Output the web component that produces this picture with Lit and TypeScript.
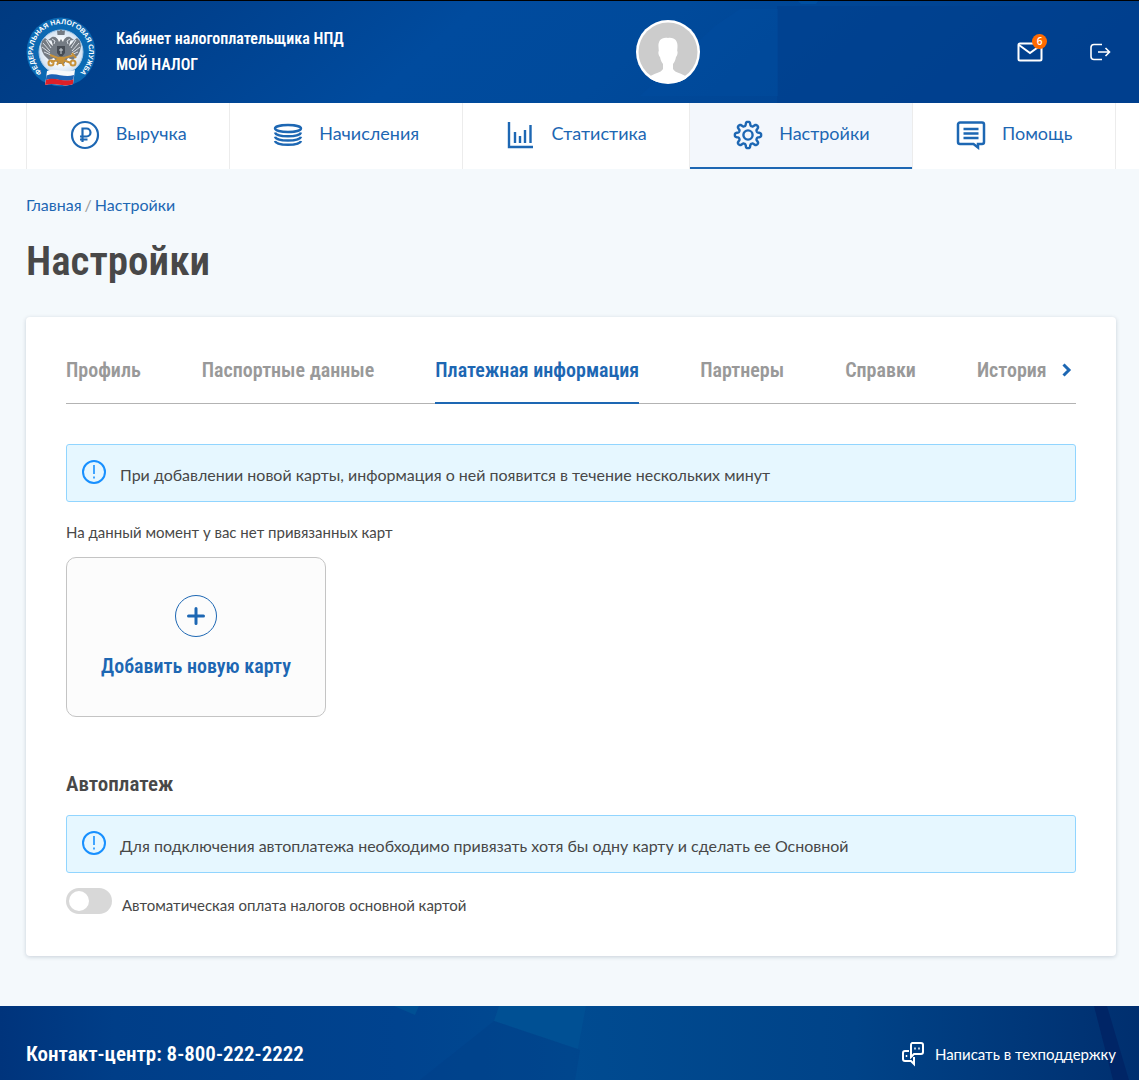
import { LitElement, html, css, svg } from "lit";
import { customElement, state } from "lit/decorators.js";
import { classMap } from "lit/directives/class-map.js";

const gearPath = (() => {
  const points: string[] = [];
  for (let i = 0; i < 160; i++) {
    const a = (i / 160) * Math.PI * 2;
    const r = 11.3 + 1.9 * Math.tanh(2 * Math.cos(8 * a));
    points.push(`${(15 + r * Math.sin(a)).toFixed(2)} ${(15 - r * Math.cos(a)).toFixed(2)}`);
  }
  return `M${points.join("L")}Z`;
})();

const icons = {
  ruble: svg`<g stroke-width="2.2"><circle cx="15" cy="15" r="13"/><path d="M12.500 22V8.500h4a4 4 0 0 1 0 8H10M10 19.500h7.500"/></g>`,
  coins: svg`<g stroke-width="2.4"><ellipse cx="15" cy="8.500" rx="13" ry="3.500"/><path d="M2 12.500c1 5 25 5 26 0M2 16.800c1 5 25 5 26 0M2 21c1 5 25 5 26 0"/></g>`,
  chart: svg`<g stroke-width="2.4"><path d="M3 2v25h24M9 12v11M14 16v7M19 10v13M24.500 5v18"/></g>`,
  gear: svg`<g stroke-width="2.4"><path d=${gearPath}/><circle cx="15" cy="15" r="4.600"/></g>`,
  chat: svg`<g stroke-width="2.5"><path d="M4 2.500h22a2 2 0 0 1 2 2V22a2 2 0 0 1-2 2h-4v3.500L17.500 24H4a2 2 0 0 1-2-2V4.500a2 2 0 0 1 2-2Z"/><path d="M7.500 9h15M7.500 13.500h15M7.500 18h15"/></g>`,
};

const sections: { label: string; icon: keyof typeof icons }[] = [
  { label: "Выручка", icon: "ruble" },
  { label: "Начисления", icon: "coins" },
  { label: "Статистика", icon: "chart" },
  { label: "Настройки", icon: "gear" },
  { label: "Помощь", icon: "chat" },
];

const tabs = ["Профиль", "Паспортные данные", "Платежная информация", "Партнеры", "Справки", "История"];

@customElement("tax-emblem")
class TaxEmblem extends LitElement {
  static styles = css`
    :host { display: block; width: 70px; height: 70px; }
    svg { display: block; width: 100%; height: 100%; overflow: visible; }
    .ring { font: bold 7px "Liberation Sans", sans-serif; fill: #fff; }
  `;
  render() {
    return html`<svg viewBox="0 0 70 70" role="img" aria-label="ФНС">
      <defs>
        <path id="arc" d="M17 56.500A28 28 0 1 1 53 56.500"/>
        <radialGradient id="disc"><stop offset=".5" stop-color="#fff"/><stop offset="1" stop-color="#cfe0f1"/></radialGradient>
      </defs>
      <circle cx="35" cy="35" r="34.500" fill="#0b69b3"/>
      <circle cx="35" cy="35" r="22" fill="url(#disc)" stroke="#a4c8e6" stroke-width="1"/>
      <text class="ring" text-anchor="middle"><textPath href="#arc" startOffset="50%">ФЕДЕРАЛЬНАЯ НАЛОГОВАЯ СЛУЖБА</textPath></text>
      <g fill="#747b83">
        <path d="M35 12l1.500 2 2.500-.5-.5 4.500h-7l-.5-4.500 2.500.500z"/>
        <path d="M33 25c-1-4-4-6-7-5l-4 3 3.500.500L27 29c-3-2-4-5-8-8l-3 3-1 5 1 5 2 4 3 3 2 2 5-2 4 6h6l4-6 5 2 2-2 3-3 2-4 1-5-1-5-3-3c-4 3-5 6-8 8l1.500-5.500L48 23l-4-3c-3-1-6 1-7 5l-2-3z"/>
      </g>
      <g stroke="#e4e9ee" stroke-width=".9" fill="none">
        <path d="M17 26l7 8M16 30l8 6M18 35l7 3M20 23l5 8M53 26l-7 8M54 30l-8 6M52 35l-7 3M50 23l-5 8M26 22l3 2-1 3M44 22l-3 2 1 3M29 18l2 3M41 18l-2 3"/>
      </g>
      <path d="M31 29h8v7l-4 5-4-5z" fill="#454b53"/>
      <path d="M35 31v6M33 33h4" stroke="#cbd2d8" stroke-width="1"/>
      <g stroke="#c8923a" stroke-width="2" fill="none">
        <path d="M25 45l23-7M46 36l4 5M45 46l-21-8M31 48l3-6 4 7"/>
        <circle cx="25" cy="46" r="2.500"/><circle cx="47" cy="46" r="2.500"/><circle cx="35" cy="43" r="2.500"/>
      </g>
      <path d="M21 54c9-4 17 3 28-1l-2 14c-10 4-17-2-28 1z" fill="#f7f9fb"/>
      <path d="M20.500 58.500c9-4 17 3 27.500-.5l-.6 4.500c-10 4-18-3-27.500.500z" fill="#1c62b4"/>
      <path d="M20 63c9-4 17 3 27.500-.5L47 67c-10 4-17-2-28 1z" fill="#dc2027"/>
    </svg>`;
  }
}

@customElement("info-alert")
class InfoAlert extends LitElement {
  static styles = css`
    :host {
      display: flex; align-items: center; gap: 14px; box-sizing: border-box; min-height: 58px;
      padding: 8px 15px; border: 1px solid #91d5ff; border-radius: 3px; background: #e6f7ff;
      font-size: 16px; line-height: 24px;
    }
    svg { flex: none; width: 24px; height: 24px; margin-bottom: 2px; }
    .text { padding-top: 4px; }
  `;
  render() {
    return html`<svg viewBox="0 0 24 24" fill="none" stroke="#1890ff" stroke-width="2" aria-hidden="true">
        <circle cx="12" cy="12" r="11"/><path stroke-width="1.600" d="M12 5v9M12 16.500v2" />
      </svg><span class="text"><slot></slot></span>`;
  }
}

@customElement("app-root")
class AppRoot extends LitElement {
  @state() private activeTab = 2;
  @state() private autopay = false;

  static styles = css`
    :host {
      --blue: #1d67b3;
      --ink: #484848;
      --display: "Roboto Condensed", "Open Sans Condensed", "Liberation Sans", sans-serif;
      display: flex; flex-direction: column; min-height: 100vh; background: #f4f9fc; color: var(--ink);
      font: 15px/24px Lato, "Noto Sans", sans-serif;
    }
    * { box-sizing: border-box; }
    a { color: inherit; text-decoration: none; }
    button { font: inherit; color: inherit; background: none; border: 0; padding: 0; cursor: pointer; }
    h1, h2, p { margin: 0; }
    .icon { fill: none; stroke: currentColor; stroke-width: 2; flex: none; display: block; }

    .header, .footer { position: relative; color: #fff; }
    .backdrop { position: absolute; inset: 0; width: 100%; height: 100%; display: block; }
    .header { border-top: 1px solid #000; background: #00428f; }
    .bar {
      position: relative; display: grid; grid-template-columns: minmax(0, 610fr) 64px minmax(0, 411fr);
      align-items: center; min-height: 102px; padding: 0 28px 0 26px;
    }
    .brand { display: flex; align-items: center; gap: 20px; font: 600 16px/26px var(--display); }
    .avatar { display: block; width: 64px; height: 64px; }
    .actions { display: flex; justify-content: flex-end; align-items: center; gap: 46px; }
    .mail { position: relative; display: block; }
    .badge {
      position: absolute; top: -8px; right: -4px; width: 15px; height: 15px; border-radius: 50%;
      background: #ff6a00; font: 600 10px/15px "Open Sans", sans-serif; text-align: center;
    }

    .nav { background: #fff; padding: 0 23px 0 26px; display: flex; }
    .section {
      flex: 1 1 auto; display: flex; justify-content: center; gap: 16px; height: 66px; padding: 17px 16px 0;
      border-left: 1px solid #ececec; color: var(--blue); font-size: 18px; line-height: 26px;
    }
    .section:last-child { border-right: 1px solid #ececec; }
    .section.current { background: #f3f7fc; box-shadow: inset 0 -2px var(--blue); }

    .main { flex: 1; padding: 24px 23px 50px 26px; }
    .crumbs { display: flex; gap: 3px; font-size: 16px; color: #9a9a9a; }
    .crumbs a { color: var(--blue); }
    .title { margin: 16px 0 28px; font: 600 41px/56px var(--display); }
    .card { padding: 40px; border-radius: 4px; background: #fff; box-shadow: 0 1px 4px rgba(0, 30, 60, .18); }

    .tabs { display: flex; align-items: flex-start; border-bottom: 1px solid #b3b3b3; }
    .list { flex: 1; min-width: 0; display: flex; gap: 61px; overflow: hidden; margin-bottom: -1px; }
    .tab {
      flex: none; height: 47px; padding-bottom: 19px; border-bottom: 2px solid transparent; white-space: nowrap;
      color: #999; font: 600 20px/26px var(--display);
    }
    .tab.active { color: var(--blue); border-color: var(--blue); }
    .next { width: 28px; height: 26px; display: grid; place-items: center; padding-left: 10px; color: var(--blue); }
    .first { margin-top: 40px; }
    .empty { margin: 18px 0 13px; }
    .add {
      width: 260px; height: 160px; display: flex; flex-direction: column; align-items: center; justify-content: center;
      gap: 15px; border: 1px solid #c4c4c4; border-radius: 10px; background: #fcfcfc; color: var(--blue);
      font: 600 20px/28px var(--display);
    }
    .subtitle { margin: 51px 0 15px; font: 600 21px/32px var(--display); }
    .switch { display: flex; align-items: flex-start; gap: 10px; margin-top: 15px; width: fit-content; }
    .switch input {
      appearance: none; width: 46px; height: 26px; margin: 0; padding: 3px; border-radius: 13px; background: #d8d8d8;
    }
    .switch input::before {
      content: ""; display: block; width: 20px; height: 20px; border-radius: 50%; background: #fff;
    }
    .switch input:checked { background: var(--blue); }
    .switch input:checked::before { margin-left: auto; }
    .switch span { padding-top: 6px; line-height: 22px; }

    .footer { background: #003f8a; }
    .contacts {
      position: relative; display: flex; align-items: center; justify-content: space-between;
      min-height: 74px; padding: 22px 23px 0 26px;
    }
    .phone { font: 600 21px/28px var(--display); }
    .support { display: flex; align-items: center; gap: 10px; }
  `;

  render() {
    return html`
      <header class="header">
        <svg class="backdrop" viewBox="0 0 1139 102" preserveAspectRatio="none" aria-hidden="true">
          <defs><linearGradient id="sky" x1="0" y1="0" x2="1" y2=".1">
            <stop offset="0" stop-color="#003a80"/><stop offset=".2" stop-color="#00418e"/>
            <stop offset=".42" stop-color="#004b9e"/><stop offset=".6" stop-color="#004a9b"/>
            <stop offset="1" stop-color="#003f8c"/></linearGradient></defs>
          <path fill="url(#sky)" d="M0 0h1139v102H0z"/>
          <path fill="#00408f" opacity=".7" d="M777 5h362v97H777z"/>
          <path fill="#004da1" opacity=".4" d="M715 25l25-17h38v87H640z"/>
          <path fill="#0050a2" d="M798 0h20l-2 3h-15z"/>
        </svg>
        <div class="bar">
          <a class="brand" href="#"><tax-emblem></tax-emblem><span>Кабинет налогоплательщика НПД<br>МОЙ НАЛОГ</span></a>
          <a href="#" aria-label="Профиль"><svg class="avatar" viewBox="0 0 64 64" aria-hidden="true">
            <circle cx="32" cy="32" r="32" fill="#fff"/>
            <circle cx="32" cy="32" r="29.500" fill="#ccc"/>
            <path fill="#fff" d="M32 18c-7-1-10 3-9.500 9l.3 4c-1 1 0 5 1.200 6 .5 3 1.500 5 3 7v5c-2 4-9 4-14 8 4 5 12 6 19 6s15-1 19-6c-5-4-12-4-14-8v-5c1.500-2 2.500-4 3-7 1.200-1 2.200-5 1.200-6l.3-4c.5-6-3-10-9.500-9z"/>
          </svg></a>
          <div class="actions">
            <a class="mail" href="#" aria-label="Сообщения">
              <svg class="icon" width="26" height="20" viewBox="0 0 26 20"><rect x="1.500" y="1.500" width="23" height="17" rx="1.500"/><path d="M2 3l11 8 11-8"/></svg>
              <span class="badge">6</span>
            </a>
            <button aria-label="Выйти">
              <svg class="icon" width="22" height="18" viewBox="0 0 22 18"><path stroke-width="1.600" d="M13 1.500H5a3 3 0 0 0-3 3v9a3 3 0 0 0 3 3h8M9 9h11M16.500 5l4 4-4 4"/></svg>
            </button>
          </div>
        </div>
      </header>

      <nav class="nav">
        ${sections.map((s) => html`<a href="#" class=${classMap({ section: true, current: s.icon === "gear" })}>
          <svg class="icon" width="30" height="30" viewBox="0 0 30 30" aria-hidden="true">${icons[s.icon]}</svg><span>${s.label}</span>
        </a>`)}
      </nav>

      <main class="main">
        <div class="crumbs"><a href="#">Главная</a><span>/</span><a href="#">Настройки</a></div>
        <h1 class="title">Настройки</h1>
        <section class="card">
          <div class="tabs">
            <div class="list" role="tablist">
              ${tabs.map((t, i) => html`<button role="tab" aria-selected=${i === this.activeTab}
                class=${classMap({ tab: true, active: i === this.activeTab })} @click=${() => (this.activeTab = i)}>${t}</button>`)}
            </div>
            <button class="next" aria-label="Далее">
              <svg class="icon" width="10" height="14" viewBox="0 0 10 14"><path stroke-width="3" d="M1.500 1.500L7 7l-5.500 5.500"/></svg>
            </button>
          </div>
          <info-alert class="first">При добавлении новой карты, информация о ней появится в течение нескольких минут</info-alert>
          <p class="empty">На данный момент у вас нет привязанных карт</p>
          <button class="add">
            <svg class="icon" width="42" height="42" viewBox="0 0 42 42" aria-hidden="true"><circle cx="21" cy="21" r="20.500" stroke-width="1"/><path stroke-width="3" stroke-linecap="round" d="M21 13.500v15M13.500 21h15"/></svg>
            <span>Добавить новую карту</span>
          </button>
          <h2 class="subtitle">Автоплатеж</h2>
          <info-alert>Для подключения автоплатежа необходимо привязать хотя бы одну карту и сделать ее Основной</info-alert>
          <label class="switch">
            <input type="checkbox" role="switch" .checked=${this.autopay} @change=${() => (this.autopay = !this.autopay)}>
            <span>Автоматическая оплата налогов основной картой</span>
          </label>
        </section>
      </main>

      <footer class="footer">
        <svg class="backdrop" viewBox="0 0 1139 74" preserveAspectRatio="none" aria-hidden="true">
          <defs><linearGradient id="deep">
            <stop offset="0" stop-color="#00347c"/><stop offset=".1" stop-color="#003e88"/><stop offset=".35" stop-color="#00438f"/>
            <stop offset=".5" stop-color="#004b91"/><stop offset=".75" stop-color="#004388"/><stop offset="1" stop-color="#002f6f"/></linearGradient></defs>
          <path fill="url(#deep)" d="M0 0h1139v74H0z"/>
          <path fill="#005094" d="M394 0h25l-4 9zM499 0h87l-8 43-84-28z"/>
          <path fill="#003f88" opacity=".4" d="M494 15l86 29-5 30H420z"/>
          <path fill="#002566" d="M1094 0h13l22 74h-16z"/>
        </svg>
        <div class="contacts">
          <a class="phone" href="tel:88002222222">Контакт-центр: 8-800-222-2222</a>
          <a class="support" href="#">
            <svg class="icon" width="24" height="26" viewBox="0 0 24 26" aria-hidden="true">
              <path d="M11 2h9a2 2 0 0 1 2 2v7a2 2 0 0 1-2 2h-7l-3 3V4a2 2 0 0 1 1-2zM8 10H4a2 2 0 0 0-2 2v6a2 2 0 0 0 2 2h6l3 3v-7"/>
              <path stroke-width="1.500" d="M14 6.500v2M18 6.500v2M5.500 14v2"/>
            </svg>
            Написать в техподдержку
          </a>
        </div>
      </footer>`;
  }
}
